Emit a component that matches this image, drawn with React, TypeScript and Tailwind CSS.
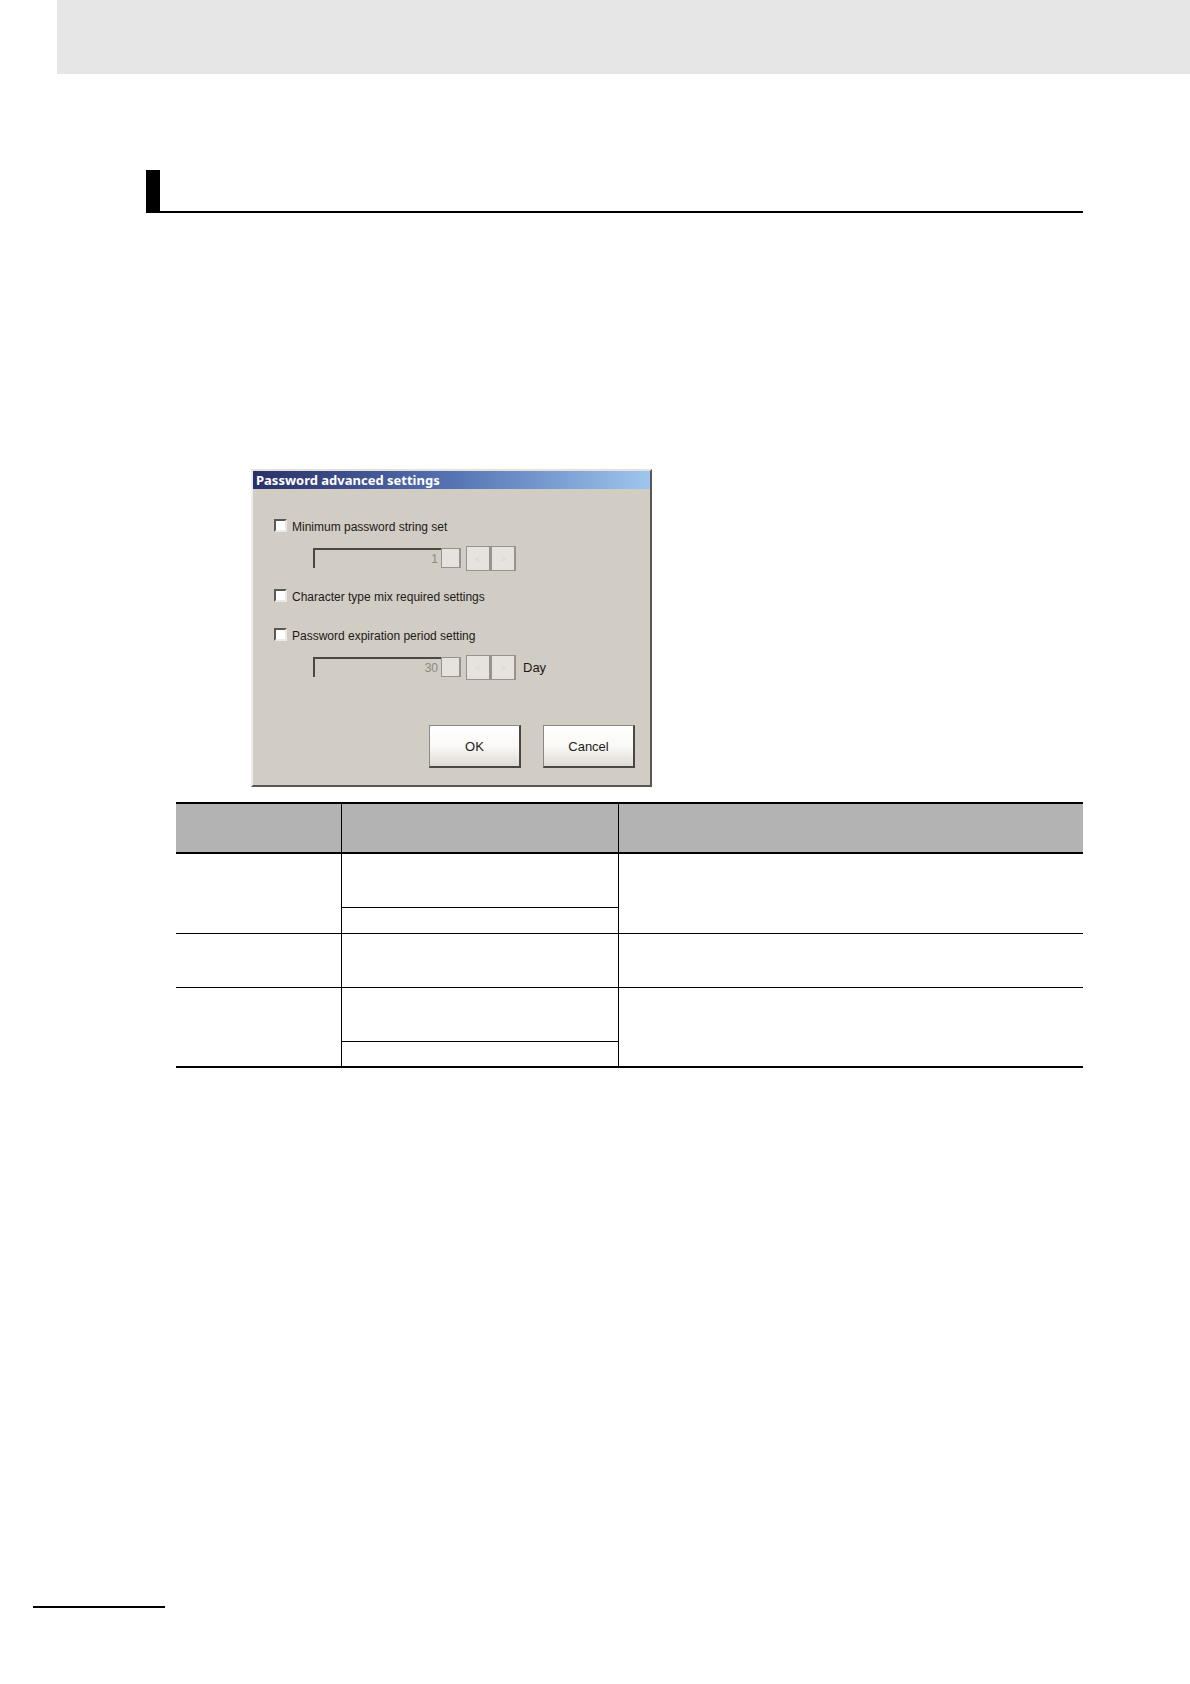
import { useState } from 'react';

type LimitFieldProps = {
    id: string;
    label: string;
    value: number;
    unit?: string;
};

const spinButton =
    'flex h-[25px] w-[25px] items-center justify-center border-y border-l border-r-2 border-[#96938f] bg-[#e6e3de] text-[9px] text-[#d9d6d1]';

function LimitField({ id, label, value, unit }: LimitFieldProps) {
    return (
        <div className="ml-[39px] mt-[10px] flex items-start">
            <div className="mt-0.5 flex">
                <input
                    id={id}
                    type="text"
                    aria-label={label}
                    defaultValue={value}
                    disabled
                    className="h-5 w-32 border-l-2 border-t-2 border-[#4b4744] bg-[#d1ccc4] pr-[3px] text-right text-xs text-[#8d8984]"
                />
                <button
                    type="button"
                    disabled
                    aria-label={`Edit ${label}`}
                    className="h-5 w-5 border-y border-l border-r-2 border-[#96938f] bg-[#e6e3de]"
                />
            </div>
            <div className="ml-[5px] flex">
                <button type="button" disabled className={spinButton} aria-label={`Decrease ${label}`}>
                    &lt;
                </button>
                <button type="button" disabled className={spinButton} aria-label={`Increase ${label}`}>
                    &gt;
                </button>
            </div>
            {unit && (
                <label htmlFor={id} className="ml-[7px] leading-[25px]">
                    {unit}
                </label>
            )}
        </div>
    );
}

function CheckOption({ label }: { label: string }) {
    const [checked, setChecked] = useState(false);

    return (
        <label className="flex h-5 items-start gap-[5px]">
            <input
                type="checkbox"
                checked={checked}
                onChange={(e) => setChecked(e.target.checked)}
                className="mt-[3px] h-[13px] w-[13px] appearance-none border-2 border-b-[#ece9e4] border-l-[#5b5754] border-r-[#ece9e4] border-t-[#5b5754] bg-white checked:bg-[#3b5998]"
            />
            <span className="text-xs leading-[22px]">{label}</span>
        </label>
    );
}

function DialogButton({ children }: { children: string }) {
    return (
        <button
            type="button"
            className="h-[43px] w-[92px] border-b-2 border-l border-r-2 border-t border-b-[#4a4845] border-l-[#8c8984] border-r-[#4a4845] border-t-[#8c8984] bg-linear-to-b from-white via-[#faf9f7] to-[#dfdbd2] pt-0.5"
        >
            {children}
        </button>
    );
}

function PasswordDialog() {
    return (
        <section
            aria-labelledby="dialog-title"
            className="ml-[105px] mt-64 w-full max-w-[401px] border-2 border-b-[#595754] border-l-[#efede8] border-r-[#595754] border-t-[#e4e2df] bg-[#d1ccc4] text-[13px] leading-5 text-[#1c1a19]"
        >
            <h2
                id="dialog-title"
                className="h-[18px] bg-linear-to-r from-[#2a3068] via-[#5573b3] to-[#9fc6ee] pl-[3px] font-['Noto_Sans',sans-serif] text-[13px] font-bold leading-[18px] text-white"
            >
                Password advanced settings
            </h2>
            <form className="pb-[17px] pl-[21px] pr-[15px] pt-[27px]" onSubmit={(e) => e.preventDefault()}>
                <CheckOption label="Minimum password string set" />
                <LimitField id="min-length" label="Minimum password length" value={1} />
                <div className="mt-[15px]">
                    <CheckOption label="Character type mix required settings" />
                </div>
                <div className="mt-[19px]">
                    <CheckOption label="Password expiration period setting" />
                </div>
                <LimitField id="expiration" label="Password expiration period" value={30} unit="Day" />
                <div className="mt-[45px] flex justify-end gap-[22px]">
                    <DialogButton>OK</DialogButton>
                    <DialogButton>Cancel</DialogButton>
                </div>
            </form>
        </section>
    );
}

function SettingsTable() {
    return (
        <table className="w-full table-fixed border-separate border-spacing-0 border-y-2 border-black">
            <colgroup>
                <col className="w-[166px]" />
                <col className="w-[277px]" />
                <col />
            </colgroup>
            <thead>
                <tr className="h-[50px] bg-[#b3b3b3]">
                    <th className="border-b-2 border-r border-black" />
                    <th className="border-b-2 border-r border-black" />
                    <th className="border-b-2 border-black" />
                </tr>
            </thead>
            <tbody>
                <tr className="h-[54px]">
                    <td rowSpan={2} className="border-b border-r border-black" />
                    <td className="border-b border-r border-black" />
                    <td rowSpan={2} className="border-b border-black" />
                </tr>
                <tr className="h-[26px]">
                    <td className="border-b border-r border-black" />
                </tr>
                <tr className="h-[54px]">
                    <td className="border-b border-r border-black" />
                    <td className="border-b border-r border-black" />
                    <td className="border-b border-black" />
                </tr>
                <tr className="h-[54px]">
                    <td rowSpan={2} className="border-r border-black" />
                    <td className="border-b border-r border-black" />
                    <td rowSpan={2} />
                </tr>
                <tr className="h-6">
                    <td className="border-r border-black" />
                </tr>
            </tbody>
        </table>
    );
}

export default function App() {
    return (
        <div className="bg-white pb-[76px] font-['Liberation_Sans',Arial,sans-serif]">
            <header className="ml-[57px] h-[74px] bg-[#e6e6e6]" />
            <main className="pl-[146px] pr-[107px] pt-24">
                <div className="h-[43px] border-b-2 border-l-[14px] border-black" />
                <PasswordDialog />
                <div className="mt-[15px] pl-[30px]">
                    <SettingsTable />
                </div>
            </main>
            <footer className="ml-[33px] mt-[538px] w-[132px] border-t-2 border-black" />
        </div>
    );
}
